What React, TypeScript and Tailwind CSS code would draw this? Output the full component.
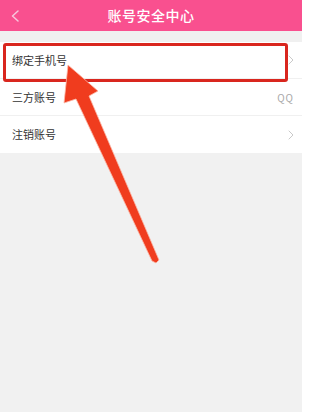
import React from "react";

const Chevron = () => (
  <svg width="6" height="10" viewBox="0 0 6 10" fill="none">
    <path d="M1 1 L5 5 L1 9" stroke="#c9c9c9" strokeWidth="1" strokeLinecap="round" strokeLinejoin="round" />
  </svg>
);

export default function App() {
  const font = { fontFamily: '"Noto Sans CJK SC", "Noto Sans", sans-serif' };
  return (
    <div className="relative w-[302px] h-[412px] bg-[#f1f1f1] overflow-hidden" style={font}>
      <div className="relative h-[31px] bg-[#f9508f] flex items-center justify-center">
        <svg className="absolute left-[11px] top-[10px]" width="8" height="12" viewBox="0 0 8 12" fill="none">
          <path d="M7 1 L1.5 6 L7 11" stroke="#f7c6dc" strokeWidth="1.5" strokeLinecap="round" strokeLinejoin="round" />
        </svg>
        <span className="text-white text-[14px] font-medium tracking-[0.5px]">账号安全中心</span>
      </div>
      <div className="h-[11px] bg-[#f0f0f0]" />
      <div className="bg-white">
        <div className="h-[37px] flex items-center justify-between pl-[12px] pr-[8px] border-b border-[#f0f0f0]">
          <span className="text-[11px] text-[#333]">绑定手机号</span>
          <Chevron />
        </div>
        <div className="h-[37px] flex items-center justify-between pl-[12px] pr-[8px] border-b border-[#f0f0f0]">
          <span className="text-[11px] text-[#333]">三方账号</span>
          <span className="text-[10px] text-[#a8a8a8] tracking-[1px]">QQ</span>
        </div>
        <div className="h-[37px] flex items-center justify-between pl-[12px] pr-[8px]">
          <span className="text-[11px] text-[#333]">注销账号</span>
          <Chevron />
        </div>
      </div>

      <div className="absolute left-[3px] top-[43px] w-[285px] h-[39px] border-[3px] border-[#d9261e] rounded-[3px]" />

      <svg className="absolute left-0 top-0 pointer-events-none" width="302" height="412" viewBox="0 0 302 412">
        <polygon
          points="68,65 98,91 89,96 159,260 156,263 152,261 76,99 64,103"
          fill="#f03c1e"
          stroke="#fbb9a8"
          strokeWidth="0.8"
          strokeLinejoin="round"
        />
      </svg>
    </div>
  );
}
